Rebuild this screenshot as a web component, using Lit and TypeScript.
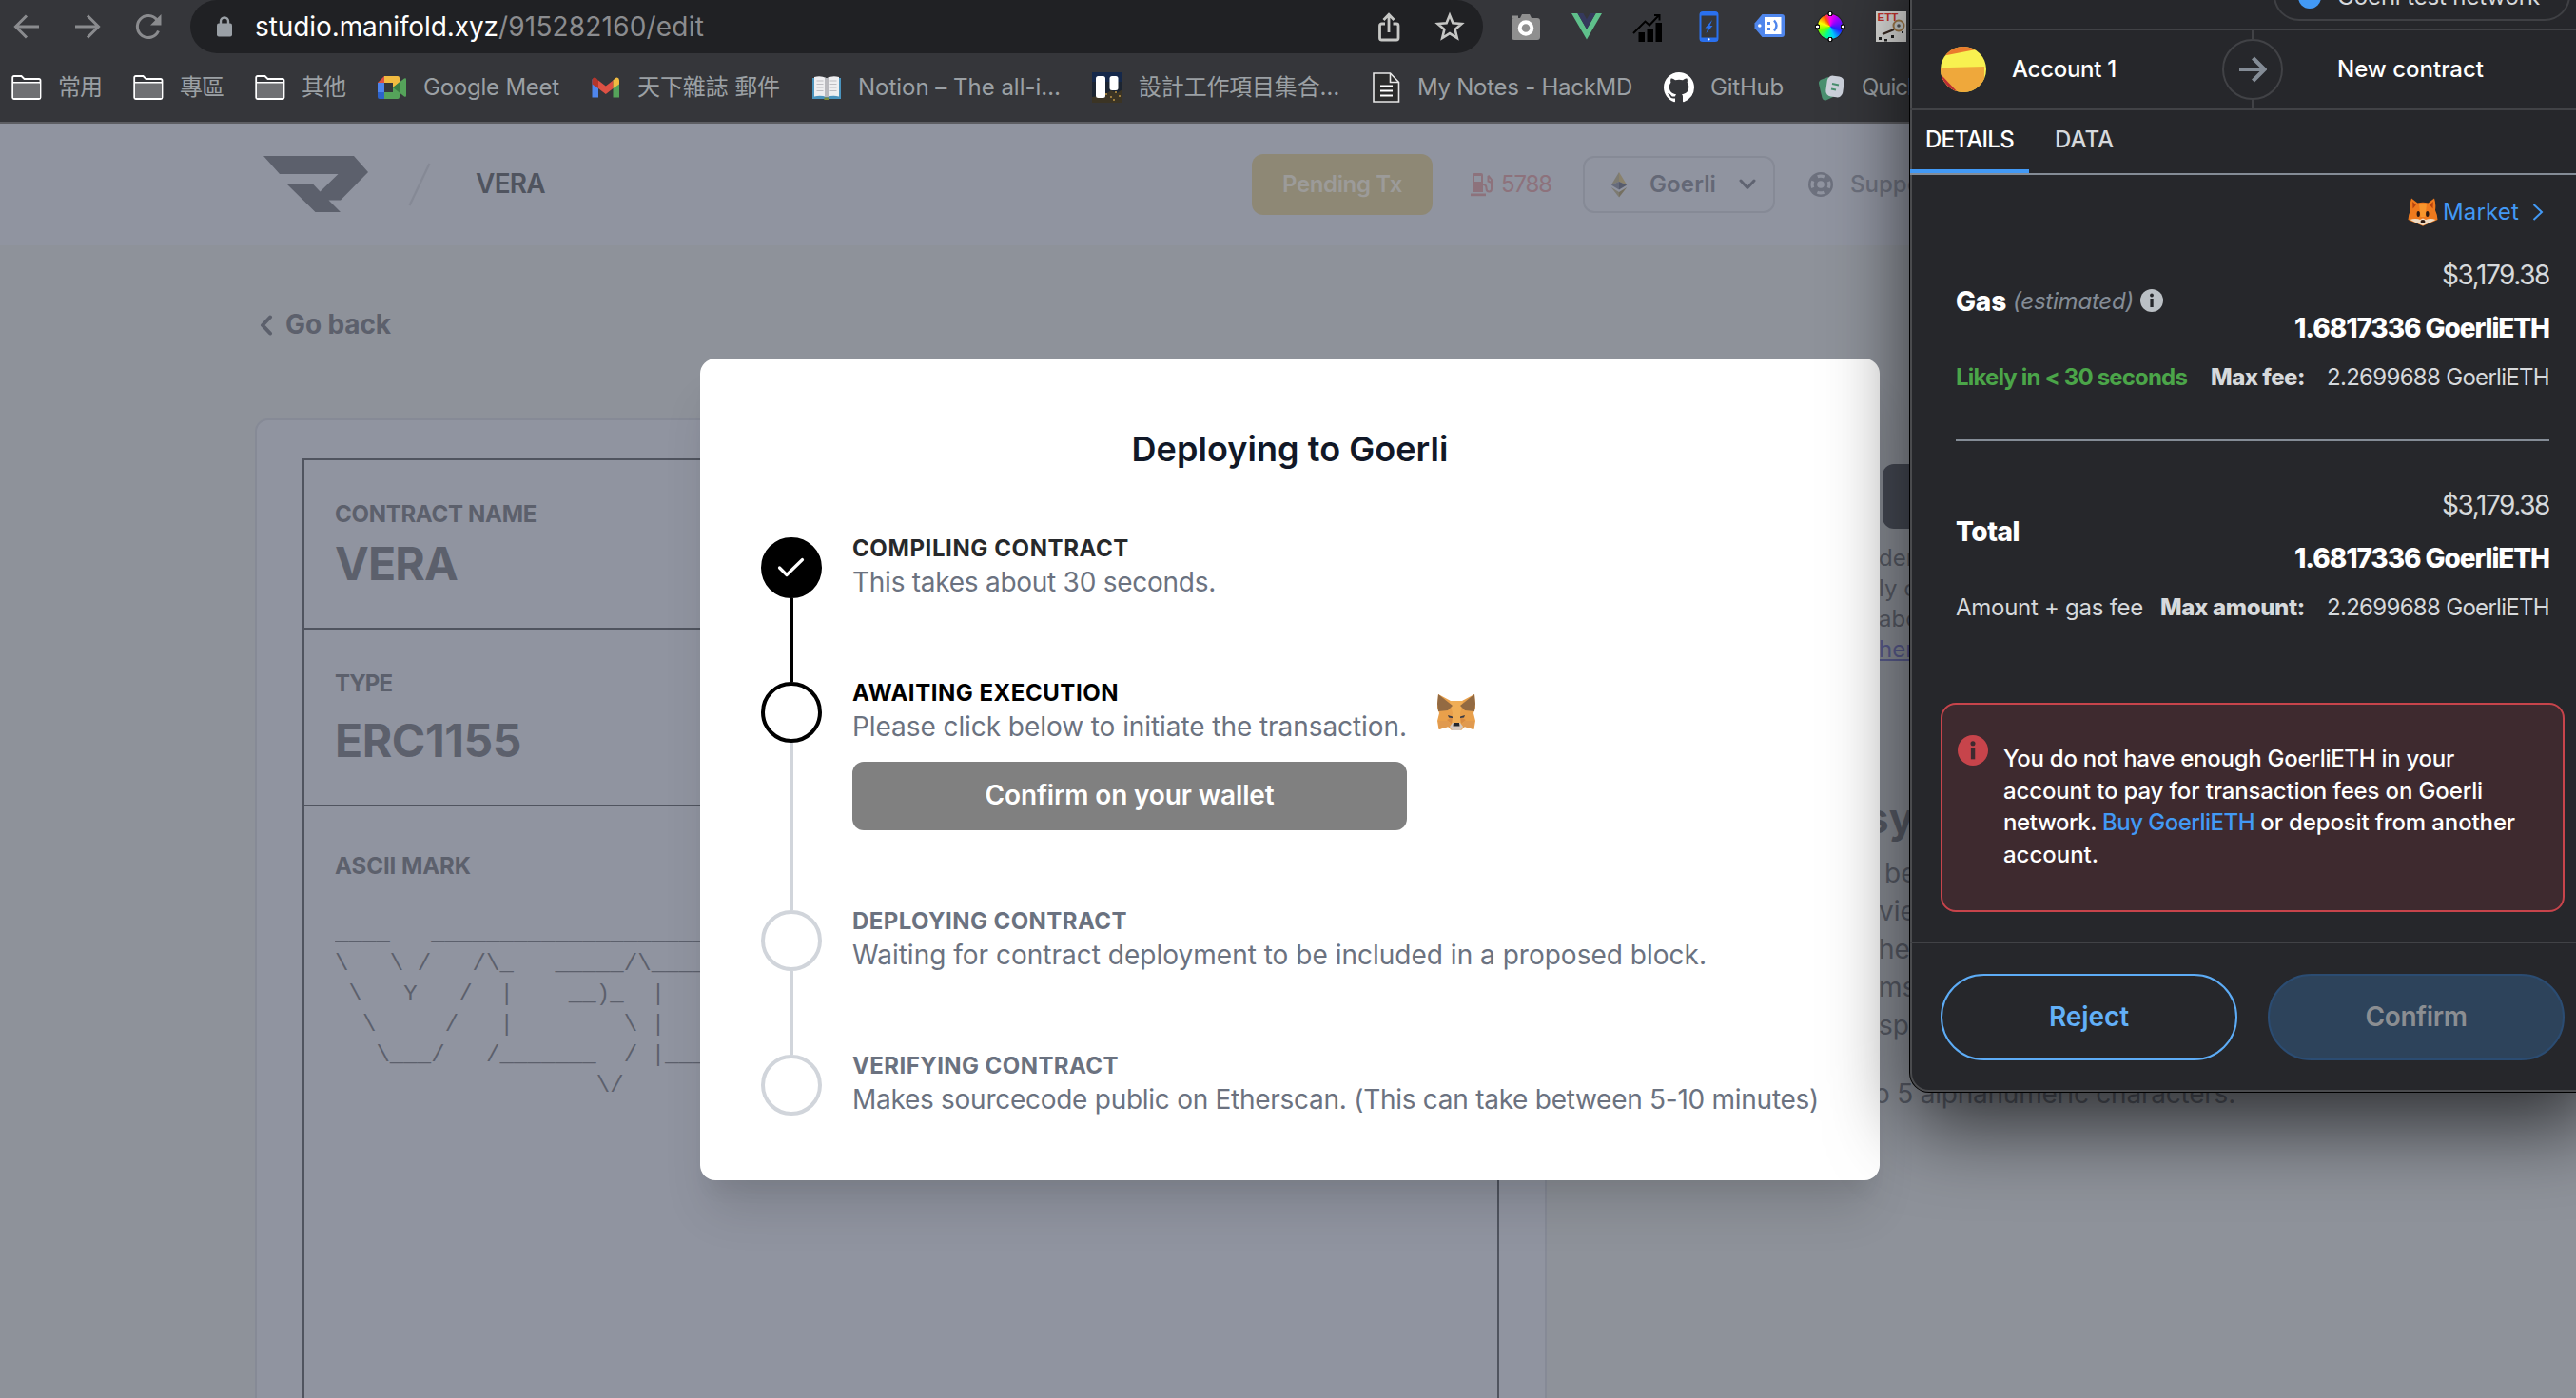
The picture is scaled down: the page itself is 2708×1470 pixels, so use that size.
import { LitElement, html, svg, css, nothing, type TemplateResult, type SVGTemplateResult } from "lit";
import { customElement, property } from "lit/decorators.js";

/** One line of text whose tracking is adjusted so that it spans `w` pixels. */
@customElement("fit-text")
class FitText extends LitElement {
  static styles = css`
    :host { display: inline-block; white-space: pre; flex: none; }
  `;
  @property({ type: Number }) w = 0;

  firstUpdated() {
    const count = [...(this.textContent ?? "")].length;
    const natural = this.getBoundingClientRect().width;
    if (this.w > 0 && count > 0) {
      this.style.letterSpacing = `${(this.w - natural) / count}px`;
    }
  }
  render() {
    return html`<slot></slot>`;
  }
}

const t = (w: number, cls: string, text: string) =>
  html`<fit-text class=${cls} w=${w}>${text}</fit-text>`;

const icon = (w: number, h: number, body: SVGTemplateResult, box = `0 0 ${w} ${h}`) =>
  html`<svg class="icon" width=${w} height=${h} viewBox=${box} fill="none">${body}</svg>`;

/* Browser toolbar icons */
const back = icon(32, 32, svg`<path d="M29 16H5M16 4.500L4.500 16L16 27.500" stroke="#8a8b8e" stroke-width="3"/>`);
const forward = icon(32, 32, svg`<path d="M3 16H27M16 4.500L27.500 16L16 27.500" stroke="#8a8b8e" stroke-width="3"/>`);
const reload = icon(32, 32, svg`<path d="M26.500 20.500A11.500 11.500 0 1 1 25 9" stroke="#8a8b8e" stroke-width="3"/><path d="M29.500 3V14.500H18Z" fill="#8a8b8e"/>`);
const lock = icon(16, 22, svg`<rect y="7.500" width="16" height="14" rx="2" fill="#9aa0a6"/><path d="M4 9V5.500a4 4 0 0 1 8 0V9" stroke="#9aa0a6" stroke-width="2.400"/>`);
const share = icon(32, 32, svg`<path d="M12 13H8.500A2 2 0 0 0 6.500 15V28A2 2 0 0 0 8.500 30H24A2 2 0 0 0 26 28V15A2 2 0 0 0 24 13H20.500M16 22V4M10.500 9L16 3.200L21.500 9" stroke="#c6c7c5" stroke-width="2.800"/>`);
const star = icon(32, 32, svg`<path d="M16 4L19.400 12.300L28.500 13L21.600 18.900L23.800 28L16 23.100L8.200 28L10.400 18.900L3.500 13L12.600 12.300Z" stroke="#c6c7c5" stroke-width="2.600"/>`);

const extensions = [
  icon(32, 32, svg`<path d="M10 7l2-4h8l2 4h6a3 3 0 0 1 3 3v17a3 3 0 0 1-3 3H4a3 3 0 0 1-3-3V10a3 3 0 0 1 3-3z" fill="#8f8f8f"/><rect x="2" y="4.500" width="6" height="3" fill="#8f8f8f"/><circle cx="16" cy="17.500" r="6.300" fill="#8f8f8f" stroke="#fff" stroke-width="4"/>`),
  icon(32, 32, svg`<path d="M0 2H6.400L16 18.700L25.600 2H32L16 29.500Z" fill="#5fc08b"/><path d="M6.400 2H12.400L16 8.200L19.600 2H25.600L16 18.700Z" fill="#35395c"/>`),
  icon(32, 32, svg`<path d="M6.500 22h6.500v10H6.500zM15.500 18H22v14h-6.500zM24.500 12H31v20h-6.500z" fill="#000"/><path d="M1 23L13.500 10.500L18 14.500L28 4M23 4h5.500v5.500" stroke="#000" stroke-width="2"/>`),
  icon(32, 32, svg`<rect x="7.500" y="1" width="18" height="30" rx="2.500" fill="#35363a" stroke="#2a70ee" stroke-width="2"/><path d="M7 1.500h19v3H7zM7 27.500h19v3.500H7z" fill="#2a70ee"/><path d="M20 9L12.500 17.500H15.500L13.500 23L20.500 15H17.500Z" fill="#2a70ee"/><circle cx="16.500" cy="29.300" r="1.100" fill="#fff"/>`),
  icon(32, 32, svg`<path d="M8.500 3H29A3 3 0 0 1 32 6V24A3 3 0 0 1 29 27H8.500L.5 17.500V12.500Z" fill="#4f86ec"/><circle cx="5.800" cy="15" r="1.800" fill="#fff"/><rect x="11" y="6" width="17.500" height="18" fill="#fff"/><path d="M14 11h3v3h-3zM14 17h3v3h-3z" fill="#4f86ec"/><path d="M21 9.500q5 5.500 0 11" stroke="#4f86ec" stroke-width="2.400"/>`),
  html`<span class="wheel"><i></i></span>`,
  icon(32, 32, svg`<rect width="32" height="32" fill="#dcdcda"/><text x="1.500" y="9.500" font-size="11.500" font-weight="700" font-family="Liberation Sans, sans-serif" fill="#c9332d">ETT</text><circle cx="24" cy="15" r="5.500" fill="#cfd3d2" stroke="#a47d4b" stroke-width="2"/><path d="M19 19L7 24" stroke="#3a2a22" stroke-width="2.400"/><circle cx="24" cy="15" r="1.800" fill="#555"/><path d="M3 27h3v3H3zM9 29h3v2.500H9zM16 25h3v3h-3zM27 21h2v2h-2z" fill="#222"/>`),
];

/* Bookmark icons */
const folder = icon(32, 28, svg`<path d="M1.200 3.500V24.500A1.500 1.500 0 0 0 2.700 26H29A1.500 1.500 0 0 0 30.500 24.500V6.500A1.500 1.500 0 0 0 29 5H13.500L10.500 2H2.700A1.500 1.500 0 0 0 1.200 3.500Z" fill="#35363a" stroke="#fff" stroke-width="1.800"/><path d="M2 9.500H30V25H2Z" fill="#6f7073"/><path d="M1.200 8.800H30.500" stroke="#fff" stroke-width="1.600"/>`);
const meet = icon(32, 26, svg`<path d="M1 8L8 1V8Z" fill="#dd5144"/><path d="M8 1H22A2 2 0 0 1 24 3V9L17 13V8H8Z" fill="#f2bb41"/><path d="M1 8H8V18H1Z" fill="#4e84ed"/><path d="M1 18H8V25H3A2 2 0 0 1 1 23Z" fill="#2c62c9"/><path d="M8 18H17V13L24 9V23A2 2 0 0 1 22 25H8Z" fill="#55a35a"/><path d="M17 13L29 3.500Q31 2.500 31 4.500V21.500Q31 23.500 29 22.500Z" fill="#55a35a"/><path d="M17 13L24 7.300V18.600Z" fill="#3b7c42"/>`);
const gmail = icon(32, 24, svg`<path d="M1.500 3V22.500H8V11Z" fill="#4f86ec"/><path d="M30 3V22.500H23.500V11Z" fill="#55a35a"/><path d="M8 4.500V13L15.800 19L23.500 13V4.500L15.800 10.500Z" fill="#dd5144"/><path d="M1.500 4.500Q2 .5 5.500 2L8 4.500V13L1.500 8.500Z" fill="#b3362c"/><path d="M30 4.500Q29.500 .5 26 2L23.500 4.500V13L30 8.500Z" fill="#f2bb41"/>`);
const book = icon(32, 26, svg`<path d="M1 3H31V25H19L16 26L13 25H1Z" fill="#4a93bd"/><path d="M3 2Q10 .3 15.500 3V23Q10 21 3 22.500Z" fill="#eeeef0"/><path d="M29 2Q22 .3 16.500 3V23Q22 21 29 22.500Z" fill="#eeeef0"/><path d="M5.500 6h7M5.500 9.500h7M5.500 13h7M5.500 16.500h7M19.500 6h7M19.500 9.500h7M19.500 13h7M19.500 16.500h7" stroke="#bdbdc2"/><path d="M14 2.500Q16 4 18 2.500V23H14Z" fill="#b9b9be"/><path d="M13.500 23.500h5V26h-5z" fill="#7c8a3a"/>`);
const trello = icon(32, 32, svg`<rect width="32" height="32" rx="3" fill="#1b2431"/><path d="M0 0H32V10H0Z" fill="#15284a"/><path d="M0 26L13 24L20 19L26 22L32 18V32H0Z" fill="#3b3424"/><path d="M14 22h2v2h-2zM19 25h2v2h-2zM24 20h2v2h-2zM28 24h2v2h-2zM22 28h2v2h-2z" fill="#9b7b3c"/><rect x="4" y="4" width="10" height="23" rx="2.500" fill="#fff"/><rect x="18.500" y="4" width="9" height="15" rx="2.500" fill="#fff"/>`);
const note = icon(32, 32, svg`<path d="M3 1H20.500L29.500 10.500V31H3Z" fill="#2b2b2b" stroke="#e8e8e8" stroke-width="1.600"/><path d="M20.500 1V10.500H29.500" stroke="#e8e8e8" stroke-width="1.600"/><path d="M10 14.500H23M10 19.500H23M10 24.500H23" stroke="#fff" stroke-width="2.200"/>`);
const github = icon(32, 32, svg`<path fill="#fff" fill-rule="evenodd" d="M8 0C3.580 0 0 3.580 0 8c0 3.540 2.290 6.530 5.470 7.590.4.070.550-.170.550-.380 0-.190-.010-.820-.010-1.490-2.010.370-2.530-.490-2.690-.940-.090-.230-.480-.940-.820-1.130-.280-.150-.680-.520-.010-.530.630-.010 1.080.580 1.230.820.720 1.210 1.870.870 2.330.660.070-.520.280-.870.510-1.070-1.780-.2-3.640-.890-3.640-3.950 0-.870.310-1.590.820-2.150-.080-.2-.360-1.020.080-2.120 0 0 .670-.210 2.200.820.640-.180 1.320-.270 2-.270s1.360.090 2 .270c1.530-1.040 2.200-.820 2.200-.820.440 1.100.160 1.920.080 2.120.510.560.820 1.270.820 2.150 0 3.070-1.870 3.750-3.650 3.950.290.250.540.730.540 1.480 0 1.070-.010 1.930-.010 2.200 0 .210.150.460.550.380A8.010 8.010 0 0 0 16 8c0-4.420-3.580-8-8-8z"/>`, "0 0 16 16");
const quick = icon(32, 28, svg`<path d="M7 5.500L14 3L19 24L11.500 27.500Q8.500 28 7.500 25L4 10Q3.500 7 7 5.500Z" fill="#4a9070"/><rect x="12" y="2" width="18" height="22" rx="6" transform="rotate(8 21 13)" fill="#cdd2dc"/><path d="M18 10l7 1.500M17 15.500l5 1" stroke="#4a9070" stroke-width="2"/>`);

const bookmarks: [TemplateResult, string, number][] = [
  [folder, "常用", 46], [folder, "專區", 46], [folder, "其他", 46],
  [meet, "Google Meet", 143], [gmail, "天下雜誌 郵件", 150],
  [book, "Notion – The all-i…", 213], [trello, "設計工作項目集合…", 211],
  [note, "My Notes - HackMD", 226], [github, "GitHub", 77], [quick, "Quick", 60],
];

/* Page icons */
const logo = icon(112, 60, svg`<path d="M0 0H95L110 17L81 46.500H68.500L81 59H54.500L24.500 29.500H52L59.500 37.500L78.500 19H17Z" fill="#5c606c"/>`);
const slash = icon(24, 46, svg`<path d="M22.500 1L1.500 45" stroke="#858995" stroke-width="2.200"/>`);
const pump = icon(24, 26, svg`<path d="M2 3A2 2 0 0 1 4 1H11A2 2 0 0 1 13 3V21H2ZM4 4V10H11V4Z" fill="#8d727c" fill-rule="evenodd"/><path d="M0 22.500H16V25.200H0Z" fill="#8d727c"/><path d="M13 13Q16.500 13 16.500 17Q16.500 20.500 19.500 20.500Q22 20.500 22 17.500V8L18.500 3.500M18.500 4V9.500L22 11" stroke="#8d727c" stroke-width="2"/>`);
const ether = icon(18, 28, svg`<path d="M9 1L.8 14.500L9 11Z" fill="#7d7b72"/><path d="M9 1L17.200 14.500L9 11Z" fill="#8a826c"/><path d="M9 11L.8 14.500L9 19.500Z" fill="#666b7b"/><path d="M9 11L17.200 14.500L9 19.500Z" fill="#565b6c"/><path d="M.8 17L9 22V27.500Z" fill="#7d7b72"/><path d="M17.200 17L9 22V27.500Z" fill="#757061"/>`);
const caretDown = icon(18, 12, svg`<path d="M2 2L9 9.500L16 2" stroke="#5f6371" stroke-width="3" stroke-linecap="round" stroke-linejoin="round"/>`);
const lifebuoy = icon(26, 26, svg`<circle cx="13" cy="13" r="13" fill="#6d717e"/><circle cx="13" cy="13" r="3.800" fill="#9094a0"/><circle cx="13" cy="13" r="8.900" stroke="#9094a0" stroke-width="3.200" stroke-dasharray="7.200 6.780" stroke-dashoffset="3.600"/>`);
const caretLeft = icon(14, 22, svg`<path d="M11 2.500L3 11L11 19.500" stroke="#5c606c" stroke-width="4" stroke-linecap="round" stroke-linejoin="round"/>`);

const check = icon(30, 22, svg`<path d="M2.500 11L10 18.500L26.500 2.500" stroke="#fff" stroke-width="3.200" stroke-linecap="round" stroke-linejoin="round"/>`);
const metamask = icon(40, 38, svg`<path d="M1 0L14 7H26L39 0L40 14L38 20L40 28L38.500 37L29 34L25 38H15L11 34L1.500 37L0 28L2 20L0 14Z" fill="#e9a04b"/><path d="M13 7H27L24 20L25 31H15L16 20Z" fill="#f0ae56"/><path d="M1 0L16 12L11 17L1 18L0 10Z" fill="#936a42"/><path d="M39 0L24 12L29 17L39 18L40 10Z" fill="#936a42"/><path d="M1 28H11L15 33L2 37ZM39 28H29L25 33L38 37Z" fill="#e09a50"/><path d="M10 27L16 24L15 31ZM30 27L24 24L25 31Z" fill="#d98c43"/><path d="M11 22L16 23.500V25L12 24.500ZM29 22L24 23.500V25L28 24.500Z" fill="#3a3a44"/><path d="M16 30H24L27 34L24.500 38H15.500L13 34Z" fill="#d5c8bd"/><path d="M17 30H23L23.500 33.500H16.500Z" fill="#22262c"/>`);

/* Wallet icons */
const avatar = icon(48, 48, svg`<defs><clipPath id="disc"><circle cx="24" cy="24" r="24"/></clipPath></defs><g clip-path="url(#disc)"><rect width="48" height="48" fill="#f8f150"/><path d="M0 0H48V1L36 3.200L4 9.500L0 12Z" fill="#ea7a2d"/><path d="M0 22.300L46 21V48H0Z" fill="#efa83b"/><path d="M0 29L18 48H0Z" fill="#b82d33"/></g>`);
const arrow = icon(30, 28, svg`<path d="M1 14H27M15.500 2L27.500 14L15.500 26" stroke="#848c96" stroke-width="4.200"/>`);
const fox = icon(32, 30, svg`<path d="M4 .5L10.500 5.500Q16 4 21.500 5.500L28 .5Q30 6 29 13Q31 17 31.500 23Q27 25 23 26.500L16 29.800L9 26.500Q5 25 .5 23Q1 17 3 13Q2 6 4 .5Z" fill="#ef7a1d"/><path d="M5.200 4L8.800 7.500L5.500 11.500ZM26.800 4L23.200 7.500L26.500 11.500Z" fill="#b5430f"/><path d="M12 6.500Q16 5.500 20 6.500L18.500 20H13.500Z" fill="#f8962c"/><path d="M2.500 23Q8 21 13 23L16 21.500L19 23Q24 21 29.500 23Q26 24.500 22.500 26.500L16 29L9.500 26.500Q6 24.500 2.500 23Z" fill="#efdcc4"/><ellipse cx="11.200" cy="17" rx="1.700" ry="3" fill="#2c1810"/><ellipse cx="20.800" cy="17" rx="1.700" ry="3" fill="#2c1810"/><ellipse cx="16" cy="25" rx="2.500" ry="1.900" fill="#2c1810"/>`);
const caretRight = icon(12, 18, svg`<path d="M1.500 1L10 9L1.500 17" stroke="#4299f5" stroke-width="2"/>`);
const info = (size: number, fill: string, ink: string) =>
  icon(size, size, svg`<circle cx="12" cy="12" r="12" fill=${fill}/><path d="M10.400 10h3.300v9h-3.300z" fill=${ink}/><circle cx="12" cy="6.500" r="1.900" fill=${ink}/>`, "0 0 24 24");

const asciiMark = [
  "____   " + "_".repeat(21),
  "\\   \\ /   /\\_   _____/\\_____",
  " \\   Y   /  |    __)_  |",
  "  \\     /   |        \\ |",
  "   \\___/   /_______  / |____",
  "                   \\/",
].join("\n");

interface Step {
  state: "done" | "active" | "todo";
  title: string;
  titleW: number;
  note: string;
  noteW: number;
  action?: boolean;
}
const steps: Step[] = [
  { state: "done", title: "COMPILING CONTRACT", titleW: 291, note: "This takes about 30 seconds.", noteW: 382 },
  { state: "active", title: "AWAITING EXECUTION", titleW: 280, note: "Please click below to initiate the transaction.", noteW: 583, action: true },
  { state: "todo", title: "DEPLOYING CONTRACT", titleW: 289, note: "Waiting for contract deployment to be included in a proposed block.", noteW: 898 },
  { state: "todo", title: "VERIFYING CONTRACT", titleW: 280, note: "Makes sourcecode public on Etherscan. (This can take between 5-10 minutes)", noteW: 1016 },
];

@customElement("app-root")
class AppRoot extends LitElement {
  static styles = css`
    :host {
      display: block; position: relative; width: 2708px; height: 1470px; overflow: hidden;
      background: #8e929a; font-family: Inter, "Noto Sans CJK TC", sans-serif;
      font-size: 24px; line-height: 28px;
    }
    .icon { display: block; flex: none; }
    .row { display: flex; align-items: center; }

    .chrome { height: 128px; background: #35363a; border-bottom: 2px solid #5d5e63; }
    .toolbar { display: flex; align-items: center; height: 56px; padding-left: 12px; gap: 32px; }
    .omnibox {
      display: flex; align-items: center; box-sizing: border-box; flex: none;
      width: 1359px; height: 56px; margin: 0 -3px 0 -4px; padding: 0 19px 0 28px;
      border-radius: 28px; background: #202124; font-size: 28px;
    }
    .host { margin-left: 24px; color: #fff; }
    .path { flex: none; color: #8b8c8f; }
    .grow { flex: 1; }
    .omnibox .share { margin-right: 32px; }
    .wheel {
      display: grid; place-items: center; flex: none; width: 32px; height: 32px;
    }
    .wheel i {
      grid-area: 1 / 1; width: 26px; height: 26px; border-radius: 50%;
      background: conic-gradient(#f0e, #a0f 40deg, #22f 110deg, #0cf 160deg, #0f9 200deg, #7f0 250deg, #ff0 290deg, #f50 330deg, #f0e);
      box-shadow: 0 0 0 1px #222;
    }
    .wheel::before {
      content: ""; grid-area: 1 / 1; width: 32px; height: 32px; z-index: 1;
      background:
        radial-gradient(circle at 50% 2.500px, #fff 1.200px, #111 1.600px 2.500px, transparent 3px),
        radial-gradient(circle at 50% 29.500px, #fff 1.200px, #111 1.600px 2.500px, transparent 3px),
        radial-gradient(circle at 2.500px 50%, #fff 1.200px, #111 1.600px 2.500px, transparent 3px),
        radial-gradient(circle at 29.500px 50%, #fff 1.200px, #111 1.600px 2.500px, transparent 3px);
    }
    .bookmarks { display: flex; align-items: center; height: 72px; padding-left: 12px; gap: 33px; }
    .bookmark { display: flex; align-items: center; gap: 17px; flex: none; color: #9ba0a4; }

    .site-head {
      display: flex; align-items: center; height: 128px; box-sizing: border-box;
      padding-left: 277px; background: #9094a0;
    }
    .brand-slash { margin-left: 40px; }
    .site-name { margin: -2px 0 0 47px; font-size: 28px; font-weight: 600; color: #50545f; }
    .pending {
      display: flex; align-items: center; justify-content: center; width: 190px; height: 64px;
      margin-left: 743px; border-radius: 12px; background: #8e8875; color: #9c9b99; font-weight: 600;
    }
    .gas { margin-left: 40px; gap: 8px; color: #8d727c; }
    .network {
      display: flex; align-items: center; box-sizing: border-box; width: 202px; height: 60px;
      margin-left: 33px; padding-left: 27px; border: 2px solid #868a96; border-radius: 12px;
      color: #646876; font-weight: 600;
    }
    .network .label { margin: 0 24px 0 23px; }
    .support { margin-left: 35px; gap: 18px; color: #6d717e; font-weight: 500; }

    .back { height: 182px; box-sizing: border-box; padding: 67px 0 0 273px; align-items: flex-start; gap: 13px; color: #5c606c; }
    .back .icon { margin-top: 6px; }
    .back-label { font-size: 28px; line-height: 32px; font-weight: 700; }
    .columns { display: flex; align-items: flex-start; padding-left: 268px; }
    .card {
      box-sizing: border-box; width: 1358px; height: 1100px; padding: 40px 48px; flex: none;
      border: 2px solid #868a96; border-radius: 14px; background: #9094a0; color: #5c606c;
    }
    .sheet { box-sizing: border-box; height: 1100px; border: 2px solid #50545f; }
    .cell { box-sizing: border-box; padding: 43px 0 0 32px; border-bottom: 2px solid #50545f; }
    .cell-name { height: 178px; }
    .cell-type { height: 186px; }
    .cell-mark { height: 700px; padding-top: 49px; }
    .caption, .value { display: block; font-weight: 700; }
    .value { font-size: 48px; line-height: 56px; }
    .cell-name .value { margin-top: 10px; }
    .cell-type .value { margin-top: 18px; }
    .ascii {
      margin: 41px 0 0; font: 24px/32px "Liberation Mono", monospace; letter-spacing: 0.060px; overflow: hidden;
    }
    .aside { display: flex; flex-direction: column; flex: none; margin-left: 334px; width: 700px; white-space: nowrap; color: #5a5e69; }
    .aside-button { width: 300px; height: 68px; margin: 48px 0 0 19px; border-radius: 12px; background: #484c57; }
    .hint { margin: 15px 0 0 15px; line-height: 32px; }
    .link { color: #5c5f92; text-decoration: underline; }
    .aside-title { margin: 133px 0 0 1px; font-size: 44px; line-height: 56px; font-weight: 700; }
    .prose { margin: 10px 0 0 15px; font-size: 28px; line-height: 40px; }
    .prose .first { margin-left: 6px; }
    .limit { margin: 32px 0 0 10px; font-size: 28px; line-height: 40px; }

    .modal {
      position: absolute; left: 736px; top: 377px; width: 1240px; height: 864px; box-sizing: border-box;
      display: flex; flex-direction: column; padding: 73px 64px 0; border-radius: 16px; background: #fff;
      box-shadow: 0 40px 50px -10px rgba(0, 0, 0, .12), 0 20px 20px -10px rgba(0, 0, 0, .05);
    }
    .title { align-self: center; font-size: 36px; line-height: 44px; font-weight: 600; color: #111827; }
    .steps { display: flex; flex-direction: column; margin-top: 71px; }
    .step { display: flex; gap: 32px; height: 152px; }
    .step.active { height: 240px; }
    .step:last-child { height: 64px; }
    .rail { display: flex; flex-direction: column; align-items: center; width: 64px; }
    .dot {
      display: grid; place-items: center; box-sizing: border-box; width: 64px; height: 64px;
      border: 4px solid #d1d5db; border-radius: 50%; flex: none;
    }
    .line { width: 4px; flex: 1; background: #d1d5db; }
    .done .dot { background: #000; border-color: #000; }
    .done .line { background: #000; }
    .active .dot { border-color: #000; }
    .step-title { display: block; width: max-content; font-weight: 700; line-height: 24px; color: #6b7280; }
    .done .step-title { color: #27292b; }
    .active .step-title { color: #000; }
    .step-note { display: block; width: max-content; font-size: 28px; line-height: 46px; color: #6b7280; }
    .confirm-wallet {
      display: flex; align-items: center; justify-content: center; width: 583px; height: 72px; box-sizing: border-box;
      margin-top: 14px; padding-bottom: 2px; border-radius: 12px; background: #808080; color: #fff; font-size: 28px; font-weight: 600;
    }
    .step-mark { margin-top: 13px; }

    .wallet {
      position: absolute; left: 2008px; top: -60px; width: 722px; height: 1208px; box-sizing: border-box;
      display: flex; flex-direction: column; border: 2px solid #4a4b4e; border-radius: 20px;
      background: #26272b; color: #fff;
      box-shadow: 0 0 0 1px #000, 0 36px 84px rgba(0, 0, 0, .66);
    }
    .wallet-top { display: flex; justify-content: flex-end; height: 88px; padding: 26px 26px 0 0; box-sizing: border-box; }
    .pill {
      display: flex; align-items: center; gap: 17px; box-sizing: border-box; width: 312px; height: 54px;
      padding: 3px 0 0 24px; border: 2px solid #3f4044; border-radius: 27px; color: #d6d9dc;
    }
    .pill i { width: 24px; height: 24px; border-radius: 50%; background: #4299f5; }
    .parties {
      display: grid; grid-template-columns: 1fr 64px 1fr; align-items: center; height: 82px;
      margin-left: -2px;
      border-top: 2px solid #414246; border-bottom: 2px solid #414246; font-weight: 500; flex: none;
    }
    .from { padding-left: 32px; gap: 27px; }
    .to { padding-left: 57px; }
    .via { display: flex; flex-direction: column; align-items: center; height: 82px; }
    .via::before, .via::after { content: ""; width: 2px; flex: 1; background: #414246; }
    .via-ring {
      display: grid; place-items: center; box-sizing: border-box; width: 64px; height: 64px;
      border: 2px solid #414246; border-radius: 50%;
    }
    .tabs { display: flex; height: 66px; flex: none; margin-left: -2px; border-bottom: 2px solid #848c96; }
    .tab {
      display: flex; align-items: center; box-sizing: border-box; padding: 0 0 0 27px;
      border-bottom: 4px solid transparent; color: #d6d9dc; font-weight: 500;
    }
    .tab.on { width: 125px; padding-left: 16px; border-bottom-color: #4299f5; color: #fff; }
    .fees { padding: 0 48px 0 46px; flex: none; }
    .market { height: 77px; justify-content: flex-end; color: #4299f5; padding-right: 6px; }
    .market .name { margin: 0 14px 0 5px; }
    .fee { display: grid; grid-template-columns: 1fr auto; height: 160px; }
    .fee-name { gap: 7px; font-size: 28px; }
    .bold { font-weight: 800; }
    .est { font-size: 24px; font-style: italic; color: #848c96; }
    .fee-name .icon { margin-top: -3px; }
    .amounts { display: flex; flex-direction: column; align-items: flex-end; font-size: 28px; line-height: 56px; }
    .amounts .usd, .muted { color: #d6d9dc; }
    .fee-foot { grid-column: 1 / 3; height: 48px; display: flex; align-items: center; }
    .likely { color: #4ba549; font-weight: 700; }
    .max { margin-left: auto; color: #d6d9dc; font-weight: 800; }
    .sum { margin-left: 23px; color: #d6d9dc; }
    .fees hr { height: 2px; margin: 41px 0 39px; border: 0; background: #848c96; }
    .alert {
      display: flex; gap: 16px; box-sizing: border-box; width: 656px; height: 220px; flex: none;
      margin: 76px 0 31px 30px; padding: 0 16px; border: 2px solid #c7444b; border-radius: 16px;
      background: #3e2a2f; font-weight: 500;
    }
    .alert .icon { margin-top: 32px; }
    .alert-body { display: flex; flex-direction: column; padding-top: 40px; line-height: 33.600px; }
    .alert-line { display: flex; height: 33.600px; }
    .blue { color: #4299f5; }
    .actions { display: flex; gap: 32px; margin-left: -2px; padding: 32px 0 0 32px; border-top: 2px solid #414246; }
    .button {
      display: flex; align-items: center; justify-content: center; box-sizing: border-box;
      width: 312px; height: 91px; padding-bottom: 1px; border: 2px solid #5dacf6; border-radius: 46px;
      color: #62b0f8; font-size: 28px; font-weight: 600;
    }
    .button.off { border-color: #2b4c72; background: #2d435b; color: #8b8e92; }
  `;

  private renderStep(s: Step) {
    const last = s === steps[steps.length - 1];
    return html`<div class="step ${s.state}">
      <div class="rail">
        <div class="dot">${s.state === "done" ? check : nothing}</div>
        ${last ? nothing : html`<div class="line"></div>`}
      </div>
      <div>
        ${t(s.titleW, "step-title", s.title)}
        ${t(s.noteW, "step-note", s.note)}
        ${s.action ? html`<div class="confirm-wallet">${t(304, "", "Confirm on your wallet")}</div>` : nothing}
      </div>
      ${s.action ? html`<div class="step-mark">${metamask}</div>` : nothing}
    </div>`;
  }

  render() {
    return html`
      <div class="chrome">
        <div class="toolbar">
          ${back}${forward}${reload}
          <div class="omnibox">
            ${lock}${t(256, "host", "studio.manifold.xyz")}${t(216, "path", "/915282160/edit")}
            <span class="grow"></span><span class="share">${share}</span>${star}
          </div>
          ${extensions}
        </div>
        <div class="bookmarks">
          ${bookmarks.map(([i, label, w]) => html`<div class="bookmark">${i}${t(w, "", label)}</div>`)}
        </div>
      </div>

      <div class="site-head">
        ${logo}<span class="brand-slash">${slash}</span>${t(73, "site-name", "VERA")}
        <div class="pending">${t(126, "", "Pending Tx")}</div>
        <div class="row gas">${pump}${t(53, "", "5788")}</div>
        <div class="network">${ether}${t(70, "label", "Goerli")}${caretDown}</div>
        <div class="row support">${lifebuoy}${t(92, "", "Support")}</div>
      </div>
      <div class="row back">${caretLeft}${t(111, "back-label", "Go back")}</div>

      <div class="columns">
        <div class="card">
          <div class="sheet">
            <div class="cell cell-name">
              <div class="caption">${t(212, "", "CONTRACT NAME")}</div>
              <div class="value">${t(129, "", "VERA")}</div>
            </div>
            <div class="cell cell-type">
              <div class="caption">${t(60, "", "TYPE")}</div>
              <div class="value">${t(196, "", "ERC1155")}</div>
            </div>
            <div class="cell cell-mark">
              <div class="caption">${t(143, "", "ASCII MARK")}</div>
              <pre class="ascii">${asciiMark}</pre>
            </div>
          </div>
        </div>
        <div class="aside">
          <div class="aside-button"></div>
          <div class="hint"><div>der</div><div>ly c</div><div>abo</div><div class="link">here</div></div>
          <div class="aside-title">sy</div>
          <div class="prose"><div class="first">be</div><div>vie</div><div>he</div><div>ms</div><div>spl</div></div>
          <div class="limit">${t(380, "", "o 5 alphanumeric characters.")}</div>
        </div>
      </div>

      <div class="modal">
        ${t(333, "title", "Deploying to Goerli")}
        <div class="steps">${steps.map((s) => this.renderStep(s))}</div>
      </div>

      <div class="wallet">
        <div class="wallet-top"><div class="pill"><i></i>${t(213, "", "Goerli test network")}</div></div>
        <div class="parties">
          <div class="row from">${avatar}${t(110, "", "Account 1")}</div>
          <div class="via"><div class="via-ring">${arrow}</div></div>
          <div class="to">${t(154, "", "New contract")}</div>
        </div>
        <div class="tabs">
          <div class="tab on">${t(93, "", "DETAILS")}</div>
          <div class="tab">${t(62, "", "DATA")}</div>
        </div>
        <div class="fees">
          <div class="row market">${fox}${t(80, "name", "Market")}${caretRight}</div>
          <div class="fee">
            <div class="row fee-name">${t(53, "bold", "Gas")}${t(127, "est", "(estimated)")}${info(24, "#bbc0c5", "#26272b")}</div>
            <div class="amounts">${t(113, "usd", "$3,179.38")}${t(268, "bold", "1.6817336 GoerliETH")}</div>
            <div class="fee-foot">${t(243, "likely", "Likely in < 30 seconds")}${t(99, "max", "Max fee:")}${t(234, "sum", "2.2699688 GoerliETH")}</div>
          </div>
          <hr />
          <div class="fee">
            <div class="row fee-name">${t(67, "bold", "Total")}</div>
            <div class="amounts">${t(113, "usd", "$3,179.38")}${t(268, "bold", "1.6817336 GoerliETH")}</div>
            <div class="fee-foot">${t(197, "muted", "Amount + gas fee")}${t(152, "max", "Max amount:")}${t(234, "sum", "2.2699688 GoerliETH")}</div>
          </div>
        </div>
        <div class="alert">
          ${info(32, "#c7444b", "#3e2a2f")}
          <div class="alert-body">
            <div class="alert-line">${t(474, "", "You do not have enough GoerliETH in your")}</div>
            <div class="alert-line">${t(504, "", "account to pay for transaction fees on Goerli")}</div>
            <div class="alert-line">${t(104, "", "network. ")}${t(160, "blue", "Buy GoerliETH")}${t(274, "", " or deposit from another")}</div>
            <div class="alert-line">${t(100, "", "account.")}</div>
          </div>
        </div>
        <div class="actions">
          <div class="button">${t(84, "", "Reject")}</div>
          <div class="button off">${t(107, "", "Confirm")}</div>
        </div>
      </div>
    `;
  }
}
